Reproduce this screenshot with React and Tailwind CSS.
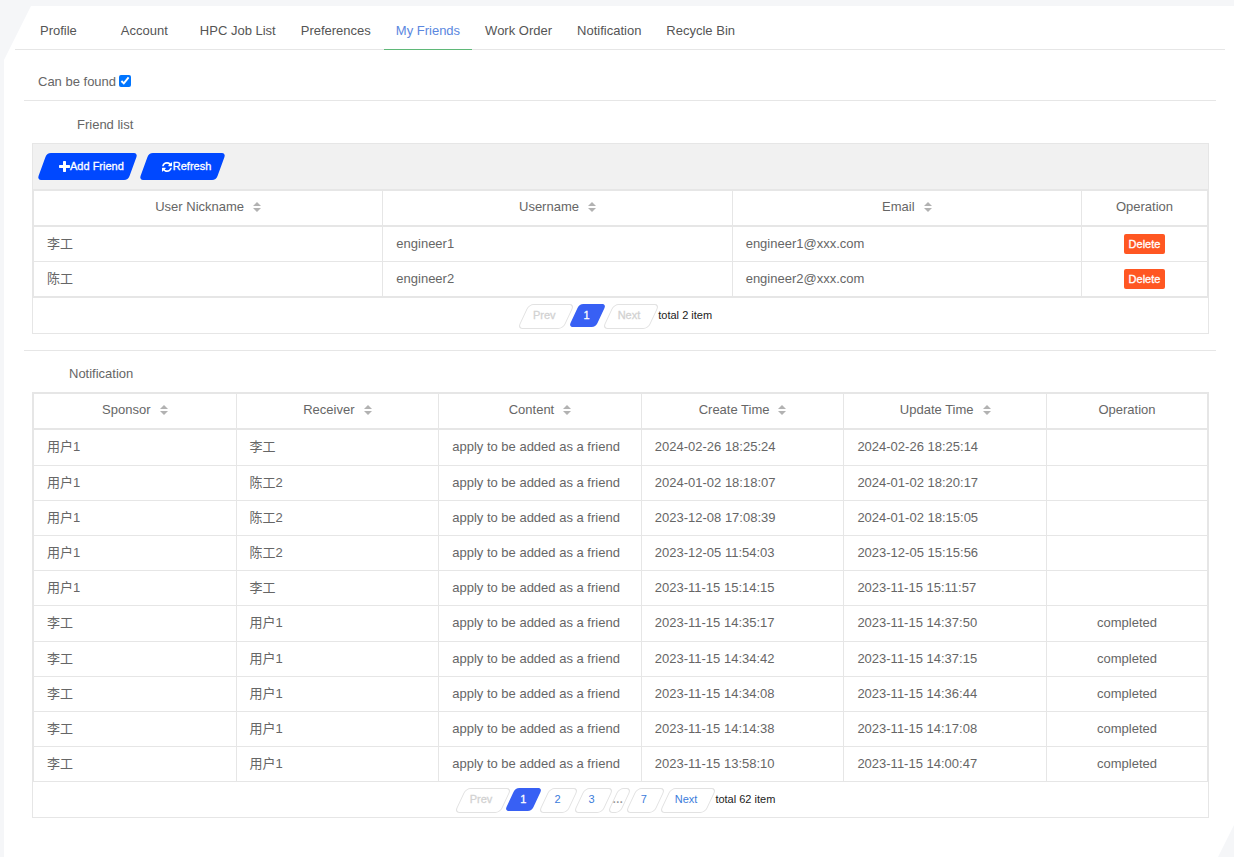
import React, { memo } from "react";
import clsx from "clsx";

const TABS = [
	{ label: "Profile", className: "mr-[19px]" },
	{ label: "Account", className: "mr-[7px]" },
	{ label: "HPC Job List" },
	{ label: "Preferences" },
	{ label: "My Friends", active: true },
	{ label: "Work Order" },
	{ label: "Notification" },
	{ label: "Recycle Bin" },
];

const FRIENDS = [
	{ nickname: "李工", username: "engineer1", email: "engineer1@xxx.com" },
	{ nickname: "陈工", username: "engineer2", email: "engineer2@xxx.com" },
];

const CONTENT = "apply to be added as a friend";

const NOTIFICATIONS = [
	["用户1", "李工", CONTENT, "2024-02-26 18:25:24", "2024-02-26 18:25:14", ""],
	["用户1", "陈工2", CONTENT, "2024-01-02 18:18:07", "2024-01-02 18:20:17", ""],
	["用户1", "陈工2", CONTENT, "2023-12-08 17:08:39", "2024-01-02 18:15:05", ""],
	["用户1", "陈工2", CONTENT, "2023-12-05 11:54:03", "2023-12-05 15:15:56", ""],
	["用户1", "李工", CONTENT, "2023-11-15 15:14:15", "2023-11-15 15:11:57", ""],
	["李工", "用户1", CONTENT, "2023-11-15 14:35:17", "2023-11-15 14:37:50", "completed"],
	["李工", "用户1", CONTENT, "2023-11-15 14:34:42", "2023-11-15 14:37:15", "completed"],
	["李工", "用户1", CONTENT, "2023-11-15 14:34:08", "2023-11-15 14:36:44", "completed"],
	["李工", "用户1", CONTENT, "2023-11-15 14:14:38", "2023-11-15 14:17:08", "completed"],
	["李工", "用户1", CONTENT, "2023-11-15 13:58:10", "2023-11-15 14:00:47", "completed"],
];

const PlusIcon = () => (
	<svg className="size-[11px]" viewBox="192 128 1408 1408" fill="currentColor" aria-hidden="true">
		<path d="M1600 736v192q0 40-28 68t-68 28h-416v416q0 40-28 68t-68 28h-192q-40 0-68-28t-28-68v-416h-416q-40 0-68-28t-28-68v-192q0-40 28-68t68-28h416v-416q0-40 28-68t68-28h192q40 0 68 28t28 68v416h416q40 0 68 28t28 68z" />
	</svg>
);

const RefreshIcon = () => (
	<svg className="mx-px size-[10px]" viewBox="0 0 1536 1536" fill="currentColor" aria-hidden="true">
		<path d="M1511 928q0 5-1 7-64 268-268 434.5t-478 166.5q-146 0-282.5-55t-243.5-157l-129 129q-19 19-45 19t-45-19-19-45v-448q0-26 19-45t45-19h448q26 0 45 19t19 45-19 45l-137 137q71 66 161 102t187 36q134 0 250-65t186-179q11-17 53-117 8-23 30-23h192q13 0 22.5 9.5t9.5 22.5zm25-800v448q0 26-19 45t-45 19h-448q-26 0-45-19t-19-45 19-45l138-138q-148-137-349-137-134 0-250 65t-186 179q-11 17-53 117-8 23-30 23h-199q-13 0-22.5-9.5t-9.5-22.5v-7q65-268 270-434.5t480-166.5q146 0 284 55.5t245 156.5l130-129q19-19 45-19t45 19 19 45z" />
	</svg>
);

const SortIcon = () => (
	<svg className="h-[10px] w-2" viewBox="0 0 8 10" fill="#b2b2b2" aria-hidden="true">
		<path d="M4 0L8 4H0zM0 6H8L4 10z" />
	</svg>
);

const ToolButton = ({ icon, children }) => (
	<button
		type="button"
		className="relative isolate flex h-[27px] cursor-pointer items-center pr-[9px] pl-[17px] text-[11px] text-white [-webkit-text-stroke:0.3px] before:absolute before:inset-0 before:-z-10 before:-skew-x-[20deg] before:rounded-[4px] before:bg-[#0048ff]">
		{icon}
		<span>{children}</span>
	</button>
);

const HeadCell = ({ children, sortable = true, className }) => (
	<th
		scope="col"
		className={clsx("border border-b-2 border-[#e6e6e6] px-[13px] pt-0 pb-px font-normal", className)}>
		<div className="flex items-center justify-center gap-[9px] leading-5">
			<span>{children}</span>
			{sortable && (
				<button type="button" aria-label="Sort" className="cursor-pointer">
					<SortIcon />
				</button>
			)}
		</div>
	</th>
);

const Row = ({ children }) => <tr className="h-[35px] nth-[5n+1]:h-9">{children}</tr>;

const Cell = ({ children, center }) => (
	<td
		className={clsx(
			"border border-[#e6e6e6] px-[13px] py-0 leading-5",
			center && "text-center"
		)}>
		{children}
	</td>
);

const PageItem = ({ children, active, disabled }) => (
	<button
		type="button"
		disabled={disabled}
		className={clsx(
			"relative isolate h-[25px] px-3.5 pb-0.5 before:absolute before:top-0 before:left-1 before:-z-10 before:-skew-x-[25deg]",
			active
				? "text-white [-webkit-text-stroke:0.3px] before:right-[3px] before:bottom-0.5 before:rounded-[4px] before:bg-[#3860f4]"
				: "before:right-px before:bottom-0 before:rounded-[5px] before:border before:border-[#e2e2e2]",
			!active && (disabled ? "text-[#d2d2d2] [-webkit-text-stroke:0.3px]" : "text-[#3b7cdb]")
		)}>
		{children}
	</button>
);

const Pagination = ({ pages, total, lastPage, nextDisabled }) => (
	<div className="flex h-[35px] items-start justify-center pt-1.5 pr-2.5 text-[11px]">
		<PageItem disabled>Prev</PageItem>
		{pages.map((page) => (
			<PageItem key={page} active={page === 1}>
				{page}
			</PageItem>
		))}
		{lastPage && (
			<>
				<span className="relative isolate h-[25px] w-[18px] text-center font-bold text-[#999] before:absolute before:inset-y-0 before:right-px before:left-1 before:-z-10 before:-skew-x-[25deg] before:rounded-[5px] before:border before:border-[#e2e2e2]">
					<span className="leading-[22px]">…</span>
				</span>
				<PageItem>{lastPage}</PageItem>
			</>
		)}
		<PageItem disabled={nextDisabled}>Next</PageItem>
		<span className="ml-1 leading-[23px] text-[#222]">total {total} item</span>
	</div>
);

const App = () => {
	return (
		<div className="flex min-h-screen flex-col bg-[#f5f6f8] pt-1.5 pl-1 font-['Liberation_Sans','Noto_Sans_CJK_SC',sans-serif] text-[13px] text-[#666]">
			<main className="flex-1 bg-white pr-[9px] pl-[11px] [clip-path:polygon(27px_0,100%_0,100%_calc(100%-32px),calc(100%-16px)_100%,0_100%,0_54px)]">
				<nav className="flex h-11 gap-px border-b border-[#e6e6e6] pl-[13px]">
					{TABS.map((tab) => (
						<a
							key={tab.label}
							href="#"
							className={clsx(
								"h-11 border-b px-3 pt-[17px] leading-4 whitespace-nowrap",
								tab.active
									? "border-[#5fb878] text-[#5b87e0]"
									: "border-transparent text-[#555]",
								tab.className
							)}>
							{tab.label}
						</a>
					))}
				</nav>

				<div className="px-[9px]">
					<div className="flex items-center gap-[3px] border-b border-[#e6e6e6] px-3.5 pt-[21px] pb-[9px]">
						<label htmlFor="can-be-found" className="pt-px leading-[19px]">
							Can be found
						</label>
						<input id="can-be-found" type="checkbox" defaultChecked className="size-3" />
					</div>

					{/* Friend list */}
					<section className="pr-[7px] pb-4 pl-2">
						<h2 className="pt-3.5 pb-2 pl-[45px] leading-5">Friend list</h2>
						<div className="border border-[#e6e6e6]">
							<div className="flex h-[46px] items-center gap-[11px] border-b border-[#e6e6e6] bg-[#f1f1f1] pl-[9px]">
								<ToolButton icon={<PlusIcon />}>Add Friend</ToolButton>
								<ToolButton icon={<RefreshIcon />}>Refresh</ToolButton>
							</div>
							<table className="w-full table-fixed border-collapse border-b-2 border-[#e6e6e6]">
								<thead>
									<tr className="h-[35px]">
										<HeadCell>User Nickname</HeadCell>
										<HeadCell>Username</HeadCell>
										<HeadCell>Email</HeadCell>
										<HeadCell sortable={false} className="w-[126px]">
											Operation
										</HeadCell>
									</tr>
								</thead>
								<tbody>
									{FRIENDS.map((friend) => (
										<Row key={friend.username}>
											<Cell>{friend.nickname}</Cell>
											<Cell>{friend.username}</Cell>
											<Cell>{friend.email}</Cell>
											<Cell center>
												<button
													type="button"
													className="h-5 cursor-pointer rounded-xs bg-[#ff5722] px-[5px] align-middle text-[11px] text-white [-webkit-text-stroke:0.3px]">
													Delete
												</button>
											</Cell>
										</Row>
									))}
								</tbody>
							</table>
							<Pagination pages={[1]} total={2} nextDisabled />
						</div>
					</section>

					{/* Notification */}
					<section className="border-t border-[#e6e6e6] pr-[7px] pb-[39px] pl-2">
						<h2 className="pt-[13px] pb-2 pl-[37px] leading-5">Notification</h2>
						<div className="border border-[#e6e6e6]">
							<table className="w-full table-fixed border-collapse">
								<thead>
									<tr className="h-9">
										<HeadCell>Sponsor</HeadCell>
										<HeadCell>Receiver</HeadCell>
										<HeadCell>Content</HeadCell>
										<HeadCell>Create Time</HeadCell>
										<HeadCell>Update Time</HeadCell>
										<HeadCell sortable={false} className="w-[161px]">
											Operation
										</HeadCell>
									</tr>
								</thead>
								<tbody>
									{NOTIFICATIONS.map((row) => (
										<Row key={row[3]}>
											{row.map((value, index) => (
												<Cell key={index} center={index === 5}>
													{value}
												</Cell>
											))}
										</Row>
									))}
								</tbody>
							</table>
							<Pagination pages={[1, 2, 3]} lastPage={7} total={62} />
						</div>
					</section>
				</div>
			</main>
		</div>
	);
};

export default memo(App);
